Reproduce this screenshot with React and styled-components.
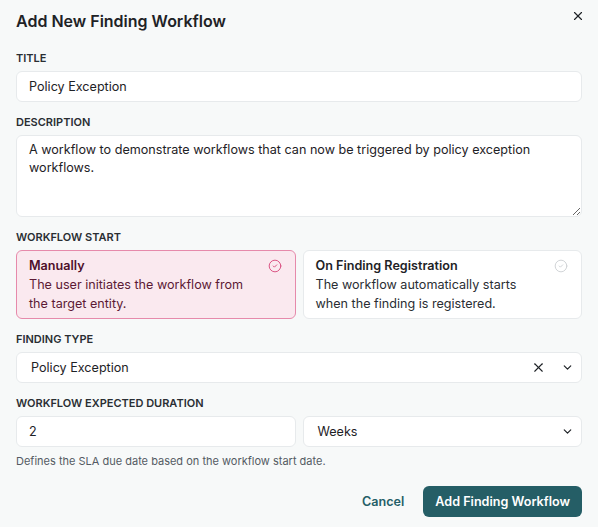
import React from 'react';
import styled, { createGlobalStyle } from 'styled-components';
import { X, ChevronDown, CircleCheck } from 'lucide-react';

const GlobalStyle = createGlobalStyle`
  * { box-sizing: border-box; }
  body {
    margin: 0;
    background: #f7f9f9;
    font-family: Inter, "Noto Sans", sans-serif;
    color: #1e2226;
  }
`;

const Dialog = styled.div`
  width: 598px;
  height: 527px;
  padding: 10px 16px 10px;
  display: flex;
  flex-direction: column;
`;

const Header = styled.div`
  display: flex;
  align-items: center;
  justify-content: space-between;
  height: 22px;
  margin-bottom: 18px;
`;

const Heading = styled.h2`
  margin: 0;
  font-size: 16px;
  line-height: 22px;
  font-weight: 600;
  color: #1e2226;
`;

const CloseButton = styled.button`
  border: 0;
  background: none;
  padding: 0;
  margin: -11px -3px 0 0;
  display: flex;
  color: #1e2226;
  cursor: pointer;
`;

const Field = styled.div`
  display: flex;
  flex-direction: column;
  gap: 5px;
  margin-bottom: 12px;
`;

const Label = styled.label`
  font-size: 11px;
  line-height: 16px;
  font-weight: 600;
  text-transform: uppercase;
  color: #2a2e33;
`;

const Input = styled.input`
  height: 31px;
  width: 100%;
  border: 1px solid #e7eaec;
  border-radius: 6px;
  background: #fff;
  padding: 0 12px;
  font: inherit;
  font-size: 12.6px;
  color: #1e2226;
  outline: none;
`;

const TextArea = styled.textarea`
  height: 82px;
  width: 100%;
  border: 1px solid #e7eaec;
  border-radius: 6px;
  background: #fff;
  padding: 5px 12px;
  font: inherit;
  font-size: 12.6px;
  line-height: 18px;
  color: #1e2226;
  resize: vertical;
  outline: none;
`;

const Options = styled.div`
  display: grid;
  grid-template-columns: 1fr 1fr;
  gap: 7px;
`;

const Option = styled.div`
  position: relative;
  border: 1px solid ${(p) => (p.$active ? '#e68aab' : '#e7eaec')};
  background: ${(p) => (p.$active ? '#fae9ef' : '#fff')};
  border-radius: 6px;
  padding: 5px 12px;
  font-size: 12.6px;
  line-height: 19px;
  color: ${(p) => (p.$active ? '#5c1a35' : '#2a2e33')};
`;

const OptionTitle = styled.div`
  font-weight: 600;
  color: ${(p) => (p.$active ? '#4e0f2b' : '#1e2226')};
`;

const OptionText = styled.div`
  max-width: 222px;
`;

const CheckMark = styled.span`
  position: absolute;
  top: 8px;
  right: 13px;
  display: flex;
  color: ${(p) => (p.$active ? '#d84a7d' : '#cdd1d4')};
`;

const SelectBox = styled.div`
  height: 31px;
  border: 1px solid #e7eaec;
  border-radius: 6px;
  background: #fff;
  display: flex;
  align-items: center;
  padding: 0 7px 0 14px;
  font-size: 12.6px;
  color: #1e2226;
`;

const SelectValue = styled.span`
  flex: 1;
`;

const SelectIcons = styled.span`
  display: flex;
  align-items: center;
  gap: 15px;
  color: #1e2226;
`;

const Row = styled.div`
  display: grid;
  grid-template-columns: 1fr 1fr;
  gap: 7px;
`;

const Hint = styled.div`
  font-size: 11px;
  line-height: 16px;
  color: #545b63;
  margin-top: -6px;
`;

const Footer = styled.div`
  margin-top: auto;
  display: flex;
  justify-content: flex-end;
  align-items: center;
  gap: 7px;
`;

const TextButton = styled.button`
  border: 0;
  background: none;
  height: 31px;
  padding: 0 12px;
  font: inherit;
  font-size: 12.6px;
  font-weight: 600;
  color: #255f68;
  cursor: pointer;
`;

const PrimaryButton = styled.button`
  border: 0;
  height: 31px;
  padding: 0 12px;
  border-radius: 6px;
  background: #255e66;
  color: #fff;
  font: inherit;
  font-size: 12.6px;
  font-weight: 600;
  cursor: pointer;
`;

const startOptions = [
  {
    id: 'manual',
    title: 'Manually',
    text: 'The user initiates the workflow from the target entity.',
  },
  {
    id: 'registration',
    title: 'On Finding Registration',
    text: 'The workflow automatically starts when the finding is registered.',
  },
];

export default function App() {
  const selected = 'manual';

  return (
    <>
      <GlobalStyle />
      <Dialog>
        <Header>
          <Heading>Add New Finding Workflow</Heading>
          <CloseButton aria-label="Close">
            <X size={14} strokeWidth={2} />
          </CloseButton>
        </Header>

        <Field>
          <Label>Title</Label>
          <Input defaultValue="Policy Exception" />
        </Field>

        <Field>
          <Label>Description</Label>
          <TextArea defaultValue="A workflow to demonstrate workflows that can now be triggered by policy exception workflows." />
        </Field>

        <Field>
          <Label>Workflow Start</Label>
          <Options>
            {startOptions.map((o) => {
              const active = o.id === selected;
              return (
                <Option key={o.id} $active={active}>
                  <OptionTitle $active={active}>{o.title}</OptionTitle>
                  <OptionText>{o.text}</OptionText>
                  <CheckMark $active={active}>
                    <CircleCheck size={14} strokeWidth={1.6} />
                  </CheckMark>
                </Option>
              );
            })}
          </Options>
        </Field>

        <Field>
          <Label>Finding Type</Label>
          <SelectBox>
            <SelectValue>Policy Exception</SelectValue>
            <SelectIcons>
              <X size={15} strokeWidth={1.8} />
              <ChevronDown size={13} strokeWidth={2.2} />
            </SelectIcons>
          </SelectBox>
        </Field>

        <Field>
          <Label>Workflow Expected Duration</Label>
          <Row>
            <Input defaultValue="2" />
            <SelectBox>
              <SelectValue>Weeks</SelectValue>
              <SelectIcons>
                <ChevronDown size={13} strokeWidth={2.2} />
              </SelectIcons>
            </SelectBox>
          </Row>
        </Field>
        <Hint>Defines the SLA due date based on the workflow start date.</Hint>

        <Footer>
          <TextButton>Cancel</TextButton>
          <PrimaryButton>Add Finding Workflow</PrimaryButton>
        </Footer>
      </Dialog>
    </>
  );
}
